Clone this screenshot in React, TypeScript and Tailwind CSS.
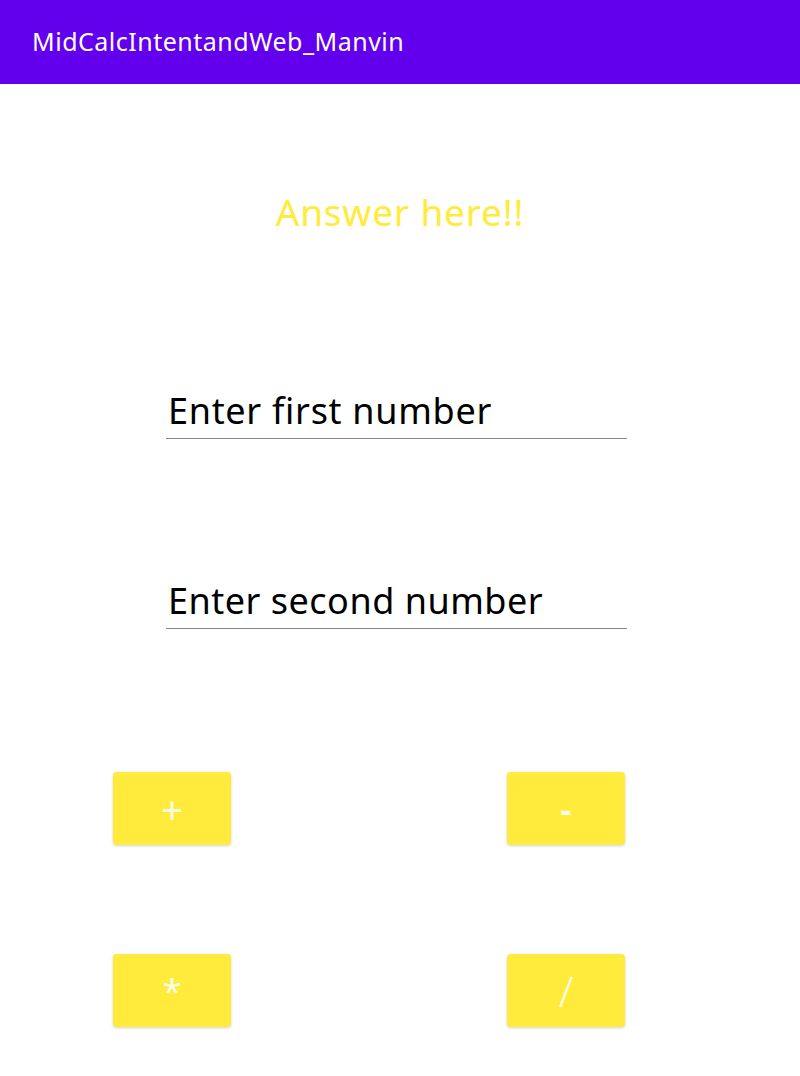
import React from "react";

const font = { fontFamily: '"Noto Sans", "Open Sans", sans-serif' };

function OpButton({ label, cls }: { label: string; cls?: string }) {
  return (
    <div className="w-[118px] h-[73px] rounded-[4px] bg-[#FFEB3B] shadow-[0_1px_3px_rgba(0,0,0,0.18)] flex items-center justify-center">
      <span className={"text-[#FFFDE7] leading-none " + (cls ?? "text-[30px]")}>{label}</span>
    </div>
  );
}

export default function App() {
  return (
    <div className="w-[800px] h-[1076px] bg-white flex flex-col" style={font}>
      <div className="h-[84px] bg-[#6200EE] flex items-center pl-[32px]">
        <span className="text-white text-[25px] tracking-[0.5px]">MidCalcIntentandWeb_Manvin</span>
      </div>
      <div className="flex justify-center mt-[106px]">
        <span className="text-[#FFEB3B] text-[37px] leading-[44px] tracking-[0.8px]">Answer here!!</span>
      </div>
      <div className="flex flex-col items-start pl-[166px] mt-[152px]">
        <div className="w-[461px] border-b border-[#888888] pb-[2px] pl-[2px]">
          <span className="text-black text-[36px] leading-[50px] tracking-[0.7px]">Enter first number</span>
        </div>
        <div className="w-[461px] border-b border-[#888888] pb-[2px] pl-[2px] mt-[137px]">
          <span className="text-black text-[36px] leading-[50px] tracking-[0.5px]">Enter second number</span>
        </div>
      </div>
      <div className="flex justify-between pl-[113px] pr-[175px] mt-[143px]">
        <OpButton label="+" cls="text-[38px]" />
        <OpButton label="-" cls="text-[34px] font-bold" />
      </div>
      <div className="flex justify-between pl-[113px] pr-[175px] mt-[109px]">
        <OpButton label="*" cls="text-[34px]" />
        <OpButton label="/" cls="text-[42px] font-light" />
      </div>
    </div>
  );
}
